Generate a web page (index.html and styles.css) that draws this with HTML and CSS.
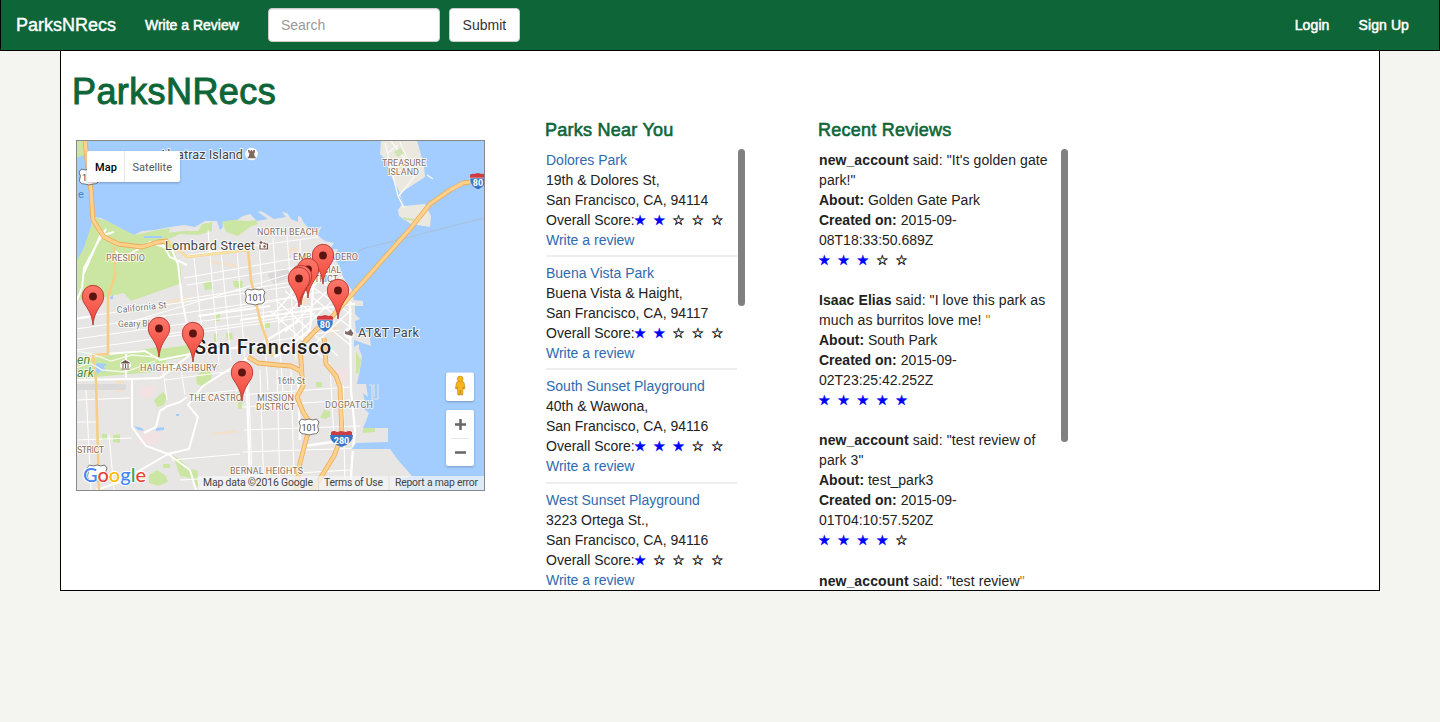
FILE: index.html
```html
<!DOCTYPE html>
<html lang="en">
<head>
<meta charset="utf-8">
<title>ParksNRecs</title>
<link rel="stylesheet" href="styles.css">
</head>
<body>
<nav class="navbar">
  <a class="brand">ParksNRecs</a>
  <a class="nav-link">Write a Review</a>
  <form class="search"><input class="field" type="text" placeholder="Search"><button class="submit" type="button">Submit</button></form>
  <a class="nav-link login">Login</a>
  <a class="nav-link signup">Sign Up</a>
</nav>
<main class="container">
  <h1 class="title">ParksNRecs</h1>
  <div class="columns">
    <section class="map">
      <svg class="map-art" width="407" height="349" viewBox="77 141 407 349">
        <defs>
          <clipPath id="landclip"><path d="M76 262L84 248 90 232 94 217 107 221 118 227 134 234 150 231 170 228 200 224 203 230 222 228 226 220 246 214 252 221 286 218 300 219 308 226 318 236 325 245 333 260 342 272 346 284 352 290 355 302 354 330 356 340 358 357 362 385 368 405 366 430 350 450 392 462 412 476 412 491 76 491Z"/></clipPath>
          <linearGradient id="pinfill" x1="0" y1="0" x2="0" y2="1"><stop offset="0" stop-color="#ff776b"/><stop offset="1" stop-color="#ee4638"/></linearGradient>
          <g id="pin"><path d="M0 0C-1-10-4-14-7-19C-9-22-10.7-24-10.7-29A10.7 10.7 0 0 1 10.7-29C10.7-24 9-22 7-19C4-14 1-10 0 0Z" fill="url(#pinfill)" stroke="#b3362c" stroke-width=".9"/><circle cy="-28.5" r="3.9" fill="#5c1410"/></g>
          <path id="plate" d="M-7.500-8Q-4-6 0-8Q4-6 7.500-8L10-5Q7.500-1 9.500 3Q9.500 7 4 7L0 8L-4 7Q-9.500 7-9.500 3Q-7.500-1-10-5Z" fill="#fff" stroke="#666" stroke-width=".9"/>
          <g id="us"><use href="#plate"/><text y="3.500" text-anchor="middle" class="shield">101</text></g>
        </defs>
        <rect x="76" y="140" width="409" height="351" fill="#a3ccff"/>
        <path d="M76 140H86L84 155 76 158Z" fill="#cbe6a3"/>
        <!-- mainland -->
        <path d="M76 262L80 256 84 248 90 232 92 222 94 217 101 218 107 221 118 227 128 233 134 235 142 231 155 230 170 227 184 225 195 227 205 221 217 221 220 230 223 227 222 222 237 220 243 216 250 214 257 221 268 219 258 212 261 211 274 219 286 217 282 212 287 213 291 219 298 222 298 216 301 217 304 223 312 232 322 226 317 235 325 241 334 243 329 250 338 249 334 258 340 267 342 275 346 282 352 290 354 300 363 301 363 306 355 306 355 314 360 319 355 321 356 333 369 332 371 346 354 340 354 347 359 344 359 349 362 356 360 370 357 384 366 384 368 397 363 393 365 402 362 407 369 413 366 421 363 428 388 428 388 442 356 443 352 449 390 449 398 460 412 476 398 480 400 491 76 491Z" fill="#e8e6e4"/>
        <path d="M369 385h3v14h6v-15M374 384v13" fill="none" stroke="#e8e6e4"/>
        <path d="M381 140H417L424 166 425 177 399 194 404 206 425 204 431 216 430 227 411 224 399 216 398 210 403 203 399 191 392 178 388 162 380 154Z" fill="#ebe8e0"/>
        <path d="M388 153l10-8M391 141l26 34M400 142l15 34-17 21M385 143l13 53 6 12M427 175l6 4" fill="none" stroke="#faf9f6" stroke-width="1.3"/>
        <path d="M394 152l6-4 4 5-6 4zM403 217l12 2v2l-12-1z" fill="#cfe2b1"/>
        <!-- parks -->
        <g fill="#cbe6a3">
          <path d="M76 262L84 248 94 217 107 221 134 235 158 230 170 228 168 238 180 264 182 283 131 301 124 293 106 297 76 300Z"/>
          <path d="M76 361L158 347 161 368 155 372 118 375 94 377 76 379Z"/>
          <path d="M167 233l16-2 15 0 4-7 10-2v9l-14 4-18-1-11 5zM222 222l10-2 16 1 8-1 2 4-8 3-12 9-12-4zM159 349l30-4v12l-22 3-7 10-5-10zM154 400l9-8 4 5-3 8-7 2zM196 377l8-8 2-8 6 14-2 8-7 4-6-3zM173 455l8 5 8 8 9 3-1 10 3 9-10-12-10-2-3-9zM203 282l9-2 2 9-9 1zM233 281l10 0-1 8-8-2zM149 475l8-5 9 6 2 6-10 4-9-3zM238 399h4v10l-4 0zM324 410l5 1-3 8-6-1zM356 352l5 8-2 12-3 2zM363 428l12 0 0 4-12 1z"/>
          <path d="M102 434h5v6h-5zM113 435l7-1 0 9-7-1zM163 464h7v4h-7zM214 313h6v8h-6zM226 333h6l1 6-6 1zM264 322h6v6h-6zM325 412l5-1v6l-5 1zM214 334h4v8h-4zM316 382h6v5h-6z"/>
        </g>
        <g fill="#f2e2e4"><path d="M139 391l10-6 7 3-2 8-10 3zM142 434l17-2 3 8-14 8-10-6zM335 370l12-4v16l-12 2z"/></g>
        <g fill="#f6dfc4" opacity=".75"><path d="M208 260l31 5-2 3-31-6zM167 301l22-5-2 6-18 2zM211 433l26-3v3l-26 2zM115 380h8v12h-8zM291 247l8 1-5 7-7-2zM295 290l10 4 4 9-9 3zM330 322l9 5-6 9-8-6z"/></g>
        <path d="M76 384h50v6H76zM267 274l19-6 6 7-18 10z" fill="#dbd9d9"/>
        <path d="M92 366l5-3 10 1-3 3 3 5-6-1-4 3-3-5zM144 236h18v2h-18zM134 426l8 2 2 3-6-1zM156 428l8-1v3l-8 1zM176 414h3v2h-3zM110 297l3-2v4h-3z" fill="#a3ccff"/>
        <!-- street network -->
        <g clip-path="url(#landclip)" fill="none" stroke="#fff">
          <g stroke-width="1">
            <path d="M76 318L300 285M76 329L300 296M76 339L310 306M76 350L320 315M120 325L330 262M183 256L325 236M184 278L332 252M187 285L330 262M180 300L330 276M200 316L320 292M167 334L315 313M230 348L340 330M165 380L240 370M200 394L238 390M240 395L350 387M242 407L350 400M244 430L360 426M243 452L365 448M76 422L96 422M76 440L132 438M76 400L130 398M172 460L240 454M180 480L350 470"/>
            <path d="M194 258L204 350M208 230L219 365M221 250L231 361M237 248L246 380M259 242L268 390M273 238L283 392M287 235L296 360M300 240L303 350M109 435L114 490M86 390L91 490M163 370L167 400M180 363L185 395M248 362L252 480M260 370L264 490M277 370L280 490M291 370L294 475M330 365L334 440M343 385L345 490"/>
          </g>
          <g stroke-width="2"><path d="M198 316L270 306M95 290L94 316 76 319M93 355L145 351 160 360 205 351 255 346M76 380L130 379 160 378 190 355M132 379L132 427 146 446 168 454 189 449 198 417 188 405 199 391 203 386 250 356M144 433L156 427 160 411 168 406 180 402 187 397M168 454L120 482 96 490M168 454L190 470 196 490M126 379V354M77 300L82 288 84 268 98 242 106 229M115 251L123 258 150 242 172 250 178 264 182 300 188 330M84 273L100 236 114 232M162 243L170 257 187 265M314 275L310 330M240 320L360 303"/><path d="M262 343L300 320M275 357L310 330M246 357L250 485M298 376L300 440M304 446L340 441M350 306L351 391 355 430 353 448 350 490" stroke-width="2.3"/></g>
          <g stroke-width="1.3"><path d="M285 291L350 345M276 300L338 356M290 280L350 327M297 276L352 315M270 311L330 364M303 268L353 304M311 261L351 293M285 332L343 276M291 340L348 286M299 346L352 298M306 352L352 309M279 323L334 265M273 315L325 254"/></g>
        </g>
        <path d="M342 264L362 249 484 218" stroke="#a9bfd8" fill="none"/>
        <!-- highways -->
        <g fill="none" stroke="#e9ad5a" stroke-width="4.8" stroke-linejoin="round"><path d="M85 140L88 170 91 190 93 220 104 237 118 244 142 247 158 242 168 241M330 319L410 229 430 204 450 190 463 183 484 180"/><path d="M248 357L258 363 278 365 291 366 301 371 302 375 303 386 297 397 303 412 311 424 306 440 300 463 296 490M330 319L316 330 300 347 302 375M324 338L326 364 336 376 340 387 342 435 334 456 313 490"/></g>
        <g fill="none" stroke="#ffd18c" stroke-width="3.2" stroke-linejoin="round"><path d="M85 140L88 170 91 190 93 220 104 237 118 244 142 247 158 242 168 241M330 319L410 229 430 204 450 190 463 183 484 180"/><path d="M248 357L258 363 278 365 291 366 301 371 302 375 303 386 297 397 303 412 311 424 306 440 300 463 296 490M330 319L316 330 300 347 302 375M324 338L326 364 336 376 340 387 342 435 334 456 313 490"/></g>
        <path d="M168 241L187 257 248 250 251 280 260 320 272 356M114 247L115 275 108 297 108 354 93 355 96 381 99 490" fill="none" stroke="#f5cf83" stroke-width="2.6"/>
        <path d="M169 242L187 257 248 250" fill="none" stroke="#ffe6a8" stroke-width="1.4"/>
        <path d="M76 351L92 354 111 361 132 355 156 357M76 368L90 363 102 370 125 372 155 361" fill="none" stroke="#f4f8e9" stroke-width="1.3"/>
        <!-- labels -->
        <g class="halo">
          <text x="159" y="159" textLength="84" class="poi">Alcatraz Island</text>
          <text x="165" y="250" textLength="90" class="poi">Lombard Street</text>
          <text x="358" y="337" textLength="61" class="poi">AT&amp;T Park</text>
          <g class="area"><text x="106" y="261" textLength="39">PRESIDIO</text><text x="257" y="235" textLength="61">NORTH BEACH</text><text x="293" y="260" textLength="65">EMBARCADERO</text><text x="298" y="273" textLength="43">FINANCIAL</text><text x="301" y="282" textLength="37">DISTRICT</text><text x="382" y="166" textLength="44">TREASURE</text><text x="388" y="175" textLength="31">ISLAND</text><text x="140" y="371" textLength="77">HAIGHT-ASHBURY</text><text x="189" y="401" textLength="53">THE CASTRO</text><text x="257" y="401" textLength="37">MISSION</text><text x="256" y="410" textLength="39">DISTRICT</text><text x="325" y="408" textLength="48">DOGPATCH</text><text x="230" y="474" textLength="73">BERNAL HEIGHTS</text><text x="77" y="453" textLength="27">STRICT</text></g>
          <g class="road"><text x="117" y="313" textLength="50" transform="rotate(-6 117 313)">California St</text><text x="118" y="327" textLength="41" transform="rotate(-1 118 327)">Geary Blvd</text><text x="277" y="384" textLength="28">16th St</text></g>
          <text x="194" y="353.500" textLength="137" class="city">San Francisco</text>
          <text x="77" y="364" class="park">en</text><text x="77" y="376.500" class="park">ark</text>
        </g>
        <text x="78" y="198" class="sea">e</text>
        <g><circle cx="251.500" cy="154" r="6.300" fill="#fff"/><path d="M248 150h1.700v1.300h1v-1.300h1.600v1.300h1v-1.300h1.700v2.700h-1l.7 4h1v1.500h-8v-1.500h1l.7-4h-1z" fill="#806a5e"/></g>
        <g><circle cx="264" cy="246" r="5.500" fill="#fff" opacity=".8"/><path d="M260 244.500v4.500h7.500v-5h-2l-1-1h-1.500M259.500 242.500h3M261 241v3" fill="none" stroke="#795548" stroke-width="1.200"/><circle cx="264.500" cy="246.500" r="1.200" fill="#795548"/></g>
        <g><circle cx="125.500" cy="365" r="5.500" fill="#fff"/><path d="M121.500 363l4-2.500 4 2.500zM123 364v4M125.500 364v4M128 364v4M121.500 369h8" fill="#795548" stroke="#795548"/></g>
        <g><circle cx="349" cy="333" r="5.500" fill="#fff" opacity=".8"/><path d="M345 330.500q1 2 3 1l3-2.500 1 2.500 1.500 1.500-1.500 3-7-2z" fill="#806a66"/></g>
        <use href="#us" x="255" y="297"/><use href="#us" x="309" y="427"/>
        <use href="#plate" x="89" y="177"/><text x="82" y="180.500" class="shield">1</text>
        <use href="#plate" x="97" y="473"/>
        <g id="interstate"><path d="M317 317Q319 315 321 316L325 315 329 316Q331 315 333 317V320H317Z" fill="#d13a40"/><path d="M317 320H333Q334 328 325 332Q316 328 317 320Z" fill="#3975c6" stroke="#fff" stroke-width=".5"/><text x="325" y="328" text-anchor="middle" class="shield white">80</text></g>
        <use href="#interstate" x="153" y="-142"/>
        <path d="M331 432Q334 430 337 432L341 431 346 432Q349 430 352 432V435H331Z" fill="#d13a40"/><path d="M330 435H353Q353 443 341.500 447Q330 443 330 435Z" fill="#3975c6"/><text x="341.500" y="444" text-anchor="middle" class="shield white">280</text>
        <use href="#pin" x="93" y="325"/><use href="#pin" x="159" y="357"/><use href="#pin" x="193" y="362"/><use href="#pin" x="242" y="401"/>
        <use href="#pin" x="323" y="284"/><use href="#pin" x="308" y="298"/><use href="#pin" x="301" y="305"/><use href="#pin" x="299" y="307"/><use href="#pin" x="338" y="319"/>
        <!-- attribution -->
        <path d="M198 476H484V490H198Z" fill="#f5f5f5" opacity=".72"/><path d="M318.500 476V490M389 476V490" stroke="#ddd"/>
        <g class="legal"><text x="203" y="486" textLength="110">Map data ©2016 Google</text><text x="324" y="486" textLength="59">Terms of Use</text><text x="395" y="486" textLength="83">Report a map error</text></g>
        <text x="83" y="482" textLength="63" class="google"><tspan fill="#4285f4">G</tspan><tspan fill="#ea4335">o</tspan><tspan fill="#fbbc05">o</tspan><tspan fill="#4285f4">g</tspan><tspan fill="#34a853">l</tspan><tspan fill="#ea4335">e</tspan></text>
        <!-- controls -->
        <g class="control"><rect x="87" y="151" width="93" height="31" rx="2"/><rect x="446" y="372.500" width="28" height="28.500" rx="2"/><rect x="446" y="410" width="28" height="56" rx="2"/></g>
        <path d="M124.500 151V182M451 438.500H469" stroke="#e6e6e6"/>
        <text x="95" y="170.500" textLength="22" class="mode on">Map</text><text x="132.500" y="170.500" textLength="39.500" class="mode">Satellite</text>
        <path d="M455 424.500H466M460.500 419V430M455 452.500H466" stroke="#666" stroke-width="2.500"/>
        <path d="M456.500 382.500l2-1.500h3.500l2 1.500 1 6-1.300.5-.7-2-.3 8h-2l-.4-5-.5 5h-2l-.4-8-.7 2-1.200-.5z" fill="#f9b51e" stroke="#b07a12" stroke-width=".6"/><circle cx="460.200" cy="379" r="2.900" fill="#f9b51e" stroke="#c88a14" stroke-width=".6"/>
      </svg>
    </section>
    <section class="parks">
      <h4 class="heading">Parks Near You</h4>
      <div class="scroller">
        <div class="park-list">
          <div class="item"><a>Dolores Park</a><p>19th &amp; Dolores St,</p><p>San Francisco, CA, 94114</p><p class="score">Overall Score:<span class="stars"><b>★</b><b>★</b><i>☆</i><i>☆</i><i>☆</i></span></p><a>Write a review</a></div>
          <div class="item"><a>Buena Vista Park</a><p>Buena Vista &amp; Haight,</p><p>San Francisco, CA, 94117</p><p class="score">Overall Score:<span class="stars"><b>★</b><b>★</b><i>☆</i><i>☆</i><i>☆</i></span></p><a>Write a review</a></div>
          <div class="item"><a>South Sunset Playground</a><p>40th &amp; Wawona,</p><p>San Francisco, CA, 94116</p><p class="score">Overall Score:<span class="stars"><b>★</b><b>★</b><b>★</b><i>☆</i><i>☆</i></span></p><a>Write a review</a></div>
          <div class="item"><a>West Sunset Playground</a><p>3223 Ortega St.,</p><p>San Francisco, CA, 94116</p><p class="score">Overall Score:<span class="stars"><b>★</b><i>☆</i><i>☆</i><i>☆</i><i>☆</i></span></p><a>Write a review</a></div>
        </div>
        <div class="thumb short"></div>
      </div>
    </section>
    <section class="reviews">
      <h4 class="heading">Recent Reviews</h4>
      <div class="scroller">
        <div class="review-list">
          <div class="review"><p class="quote"><strong>new_account</strong> said: "It's golden gate<br>park!"</p><p><strong>About:</strong> Golden Gate Park</p><p><strong>Created on:</strong> 2015-09-<br>08T18:33:50.689Z</p><p class="stars"><b>★</b><b>★</b><b>★</b><i>☆</i><i>☆</i></p></div>
          <div class="review"><p class="quote"><strong>Isaac Elias</strong> said: "I love this park as<br>much as burritos love me! <span class="mark">"</span></p><p><strong>About:</strong> South Park</p><p><strong>Created on:</strong> 2015-09-<br>02T23:25:42.252Z</p><p class="stars"><b>★</b><b>★</b><b>★</b><b>★</b><b>★</b></p></div>
          <div class="review"><p class="quote"><strong>new_account</strong> said: "test review of<br>park 3"</p><p><strong>About:</strong> test_park3</p><p><strong>Created on:</strong> 2015-09-<br>01T04:10:57.520Z</p><p class="stars"><b>★</b><b>★</b><b>★</b><b>★</b><i>☆</i></p></div>
          <div class="review"><p class="quote"><strong>new_account</strong> said: "test review<span class="mark">"</span></p></div>
        </div>
        <div class="thumb long"></div>
      </div>
    </section>
  </div>
</main>
</body>
</html>
```
FILE: styles.css
```css
* { box-sizing: border-box; }
body { margin: 0; background: #f4f5f1; color: #222; font: 14px/20px "Liberation Sans", Arial, sans-serif; height: 722px; overflow: hidden; }
p, h1, h4 { margin: 0; }
.navbar { display: flex; align-items: center; height: 51px; padding: 0 30px 0 15px; background: #0e6638; border: 1px solid #000; border-top: 0; color: #fff; }
.brand { font-size: 18px; width: 129px; -webkit-text-stroke: .4px #fff; }
.nav-link { -webkit-text-stroke: .5px #fff; white-space: nowrap; }
.search { display: flex; gap: 9px; margin-left: 29px; }
.field { width: 172px; height: 34px; padding: 6px 12px; border: 1px solid #ccc; border-radius: 4px; font: inherit; box-shadow: inset 0 1px 1px rgba(0,0,0,.08); }
.field::placeholder { color: #999; }
.submit { width: 71px; height: 34px; padding: 0; border: 1px solid #ccc; border-radius: 4px; background: #fff; color: #333; font: inherit; }
.login { margin-left: auto; margin-right: 29px; letter-spacing: .1px; }
.signup { letter-spacing: .1px; }
.container { width: 1320px; height: 540px; margin: 0 auto; padding-left: 12px; background: #fff; border: 1px solid #000; border-top: 0; overflow: hidden; }
.title { padding-top: 21px; height: 69px; color: #0e6638; font-size: 36px; line-height: 40px; font-weight: 400; letter-spacing: .4px; -webkit-text-stroke: 1px #0e6638; margin-left: -1px; }
.columns { display: flex; height: 470px; }
.map { width: 409px; height: 351px; margin: 20px 61px 0 3px; border: 1px solid #888; flex: none; }
.map-art { display: block; font-family: Roboto, sans-serif; }
.parks { width: 273px; }
.reviews { width: 260px; }
.heading { height: 30px; color: #0e6638; font-size: 18px; line-height: 20px; font-weight: 400; letter-spacing: .25px; -webkit-text-stroke: .6px #0e6638; white-space: nowrap; margin-left: -1px; }
.scroller { display: flex; align-items: flex-start; height: 440px; }
.park-list { width: 191px; }
.review-list { width: 242px; }
.item { height: 107.200px; margin-bottom: 6px; border-bottom: 2px solid #eee; white-space: nowrap; }
.item a { display: block; color: #2f6aae; }
.score { display: flex; }
.stars { display: flex; font-family: "DejaVu Sans", sans-serif; font-size: 14px; margin-left: -1px; }
.stars b, .stars i { width: 19.300px; font-weight: 400; font-style: normal; height: 20px; }
.stars b { color: #00f; -webkit-text-stroke: .3px #00f; }
.stars i { color: #111; -webkit-text-stroke: .35px #111; }
.review { height: 140.200px; white-space: nowrap; }
.quote { letter-spacing: .09px; }
.mark { color: #b5831f; }
.thumb { width: 7px; border-radius: 4px; background: #808080; margin: -1px 0 0 1px; }
.short { height: 157px; }
.long { height: 293px; margin-left: 0; }
.halo text { paint-order: stroke; stroke: #fff; stroke-width: 2px; stroke-opacity: .8; stroke-linejoin: round; }
.halo .poi { font-size: 12.700px; fill: #444; }
.area { font-size: 9px; fill: #896f5b; font-weight: 400; }
.road { font-size: 9px; fill: #777; }
.halo .city { font-size: 20px; font-weight: 500; fill: #222; }
.halo .park { font-size: 12.500px; font-style: italic; fill: #4c8b3b; }
.sea { font-size: 11px; fill: #4d87c9; }
.shield { font-size: 9px; font-weight: 400; fill: #444; }
.shield.white { fill: #fff; font-weight: 700; }
.legal { font-size: 10.400px; fill: #444; }
.google { font: 500 20px Lato, sans-serif; paint-order: stroke; stroke: #fff; stroke-width: 2px; }
.control { fill: #fff; filter: drop-shadow(0 1px 1px rgba(0,0,0,.25)); }
.mode { font-size: 11px; fill: #565656; }
.on { font-weight: 500; fill: #000; }
```
